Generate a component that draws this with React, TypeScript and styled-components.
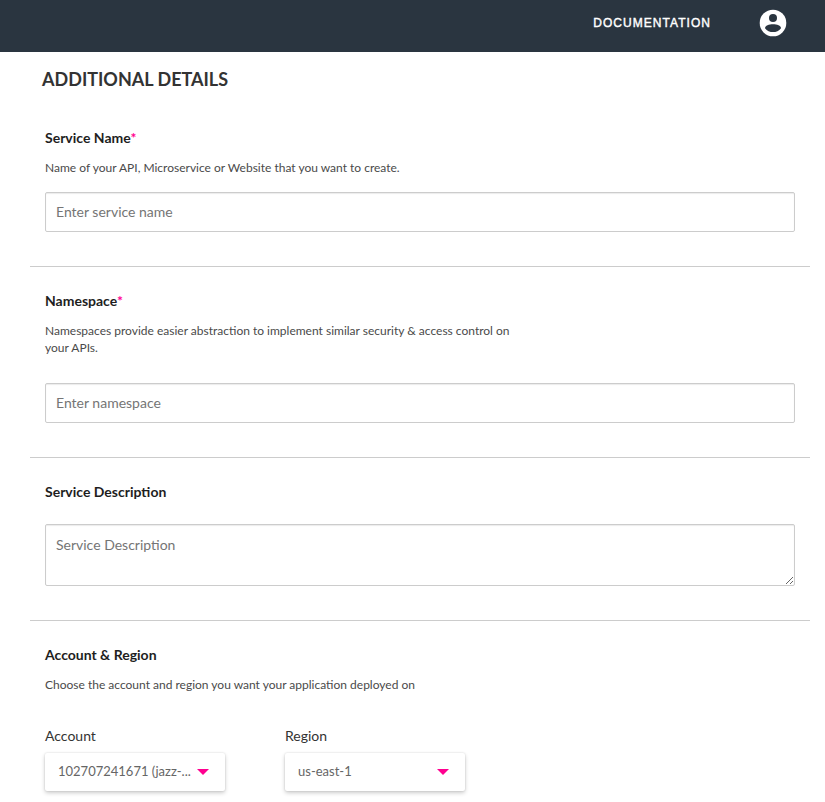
import React from "react";
import styled, { createGlobalStyle } from "styled-components";

const GlobalStyle = createGlobalStyle`
  * { box-sizing: border-box; }
  body { margin: 0; background: #fff; color: #1e1e1e; font-family: Lato, "Liberation Sans", sans-serif; overflow: hidden; }
  h1, h2, p { margin: 0; }
`;

const Page = styled.div`
  height: 802px;
  overflow: hidden;
`;

const Header = styled.header`
  height: 52px;
  background: #2a3540;
  display: flex;
  align-items: flex-start;
  justify-content: flex-end;
  padding: 8px 37px 0 0;
  gap: 47px;
`;

const NavLink = styled.a`
  color: #fff;
  font: 400 12px/30px "Liberation Sans", Arial, sans-serif;
  letter-spacing: 1.04px;
  -webkit-text-stroke: 0.4px #fff;
`;

const Avatar = styled.svg`
  display: block;
  width: 30px;
  height: 30px;
`;

const Content = styled.main`
  padding: 0 15px 0 30px;
`;

const Title = styled.h1`
  font-size: 18px;
  line-height: 24px;
  font-weight: 700;
  padding: 15px 0 0 12px;
  color: #333;
`;

const Section = styled.section<{ $height: number; $top?: number }>`
  height: ${(p) => p.$height}px;
  padding: ${(p) => p.$top ?? 24}px 15px 0;
  border-bottom: 1px solid #ccc;
  display: flex;
  flex-direction: column;
`;

const Label = styled.h2`
  font-size: 14px;
  line-height: 20px;
  font-weight: 700;
`;

const Required = styled.span`
  color: #ff0090;
`;

const Hint = styled.p`
  font-size: 12px;
  line-height: 17px;
  width: 480px;
  margin-top: 11px;
  color: #4a4a4a;
`;

const Input = styled.input<{ $gap: number }>`
  height: 40px;
  flex: none;
  margin-top: ${(p) => p.$gap}px;
  border: 1px solid #ccc;
  border-radius: 2px;
  box-shadow: inset 0 1px 1px rgba(0, 0, 0, 0.08);
  padding: 0 10px 2px;
  font: 14px Lato, sans-serif;
  &::placeholder { color: #757575; }
`;

const TextArea = styled.textarea`
  height: 62px;
  flex: none;
  margin-top: 22px;
  border: 1px solid #ccc;
  border-radius: 2px;
  box-shadow: inset 0 1px 1px rgba(0, 0, 0, 0.08);
  padding: 11px 10px;
  font: 14px/18px Lato, sans-serif;
  resize: vertical;
  &::placeholder { color: #757575; }
`;

const Choices = styled.div`
  display: flex;
  gap: 60px;
  margin-top: 33px;
`;

const Field = styled.div`
  width: 180px;
  font-size: 14px;
  line-height: 20px;
  color: #333;
`;

const Select = styled.div`
  height: 38px;
  margin-top: 7px;
  padding: 0 16px 2px 13px;
  display: flex;
  align-items: center;
  justify-content: space-between;
  color: #666;
  font-size: 13px;
  border-radius: 2px;
  box-shadow: 0 0 2px rgba(0, 0, 0, 0.14), 0 2px 4px rgba(0, 0, 0, 0.2);
`;

const Caret = styled.svg`
  width: 12px;
  height: 6px;
  fill: #ff0090;
  margin-top: 1px;
`;

function Dropdown({ label, value }: { label: string; value: string }) {
  return (
    <Field>
      {label}
      <Select>
        {value}
        <Caret viewBox="0 0 12 6"><path d="M0 0h12L6 6z" /></Caret>
      </Select>
    </Field>
  );
}

export default function App() {
  return (
    <Page>
      <GlobalStyle />
      <Header>
        <NavLink>DOCUMENTATION</NavLink>
        <Avatar viewBox="0 0 30 30">
          <circle cx="15" cy="15" r="13.3" fill="#fff" />
          <circle cx="15" cy="9.9" r="4" fill="#2a3540" />
          <path d="M7 20.2c0-5.2 16-5.2 16 0-3.8 5.2-12.2 5.2-16 0z" fill="#2a3540" />
        </Avatar>
      </Header>
      <Content>
        <Title>ADDITIONAL DETAILS</Title>
        <Section $height={176} $top={37}>
          <Label>Service Name<Required>*</Required></Label>
          <Hint>Name of your API, Microservice or Website that you want to create.</Hint>
          <Input $gap={16} placeholder="Enter service name" />
        </Section>
        <Section $height={191}>
          <Label>Namespace<Required>*</Required></Label>
          <Hint>Namespaces provide easier abstraction to implement similar security &amp; access control on your APIs.</Hint>
          <Input $gap={27} placeholder="Enter namespace" />
        </Section>
        <Section $height={163}>
          <Label>Service Description</Label>
          <TextArea placeholder="Service Description" />
        </Section>
        <Section $height={200}>
          <Label>Account &amp; Region</Label>
          <Hint>Choose the account and region you want your application deployed on</Hint>
          <Choices>
            <Dropdown label="Account" value="102707241671 (jazz-..." />
            <Dropdown label="Region" value="us-east-1" />
          </Choices>
        </Section>
      </Content>
    </Page>
  );
}
